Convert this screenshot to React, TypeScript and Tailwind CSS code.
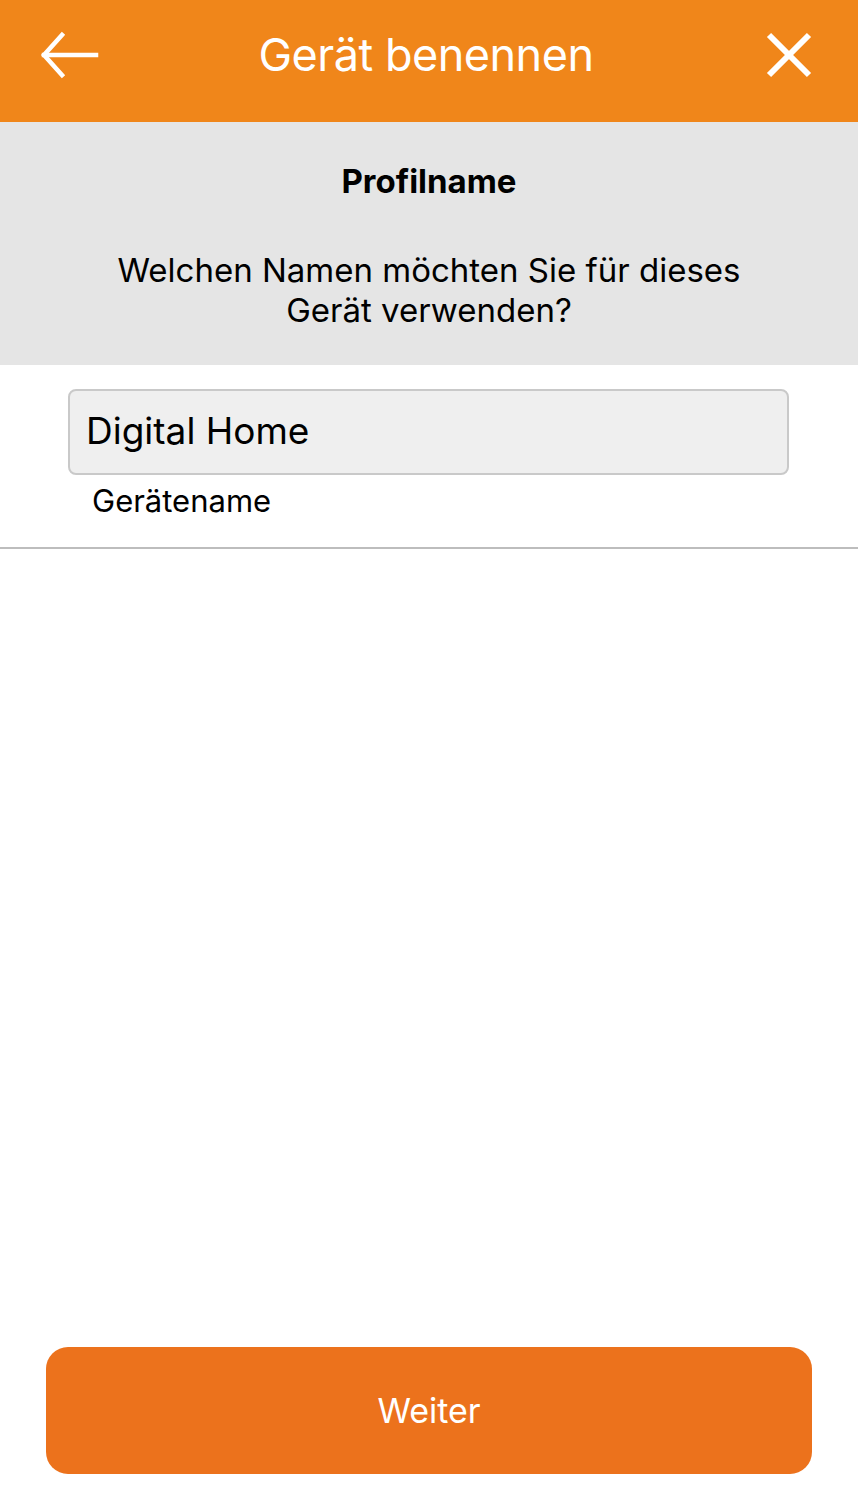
import { useState } from "react";

function BackArrow() {
  return (
    <svg width="60" height="48" viewBox="0 0 60 48" fill="none" stroke="white" strokeWidth="4.5" strokeLinecap="square">
      <path d="M4 24 H56" />
      <path d="M22 4 L4 24 L22 44" strokeLinejoin="miter" />
    </svg>
  );
}

function CloseIcon() {
  return (
    <svg width="46" height="46" viewBox="0 0 46 46" fill="none" stroke="white" strokeWidth="6" strokeLinecap="butt">
      <path d="M3 3 L43 43" />
      <path d="M43 3 L3 43" />
    </svg>
  );
}

export default function App() {
  const [name, setName] = useState("Digital Home");

  return (
    <div className="flex min-h-[1500px] w-[858px] flex-col bg-white font-['Inter',sans-serif] text-black">
      {/* header */}
      <header className="grid h-[122px] grid-cols-[1fr_auto_1fr] items-center bg-[#f0861a] pb-[12px] pl-[40px] pr-[46px]">
        <button className="flex items-center justify-self-start">
          <BackArrow />
        </button>
        <h1 className="text-[45px] font-normal tracking-[-0.5px] text-white">Gerät benennen</h1>
        <button className="flex items-center justify-self-end">
          <CloseIcon />
        </button>
      </header>

      {/* intro */}
      <section className="flex h-[243px] flex-col items-center bg-[#e5e5e5] pt-[40px] text-center">
        <h2 className="text-[33px] font-bold leading-[38px]">Profilname</h2>
        <p className="mt-[50px] text-[33px] leading-[40px]">
          Welchen Namen möchten Sie für dieses
          <br />
          Gerät verwenden?
        </p>
      </section>

      {/* name field */}
      <div className="border-b-2 border-[#bdbdbd] px-[68px] pb-[28px] pt-[24px]">
        <input
          value={name}
          onChange={(e) => setName(e.target.value)}
          className="h-[86px] w-[721px] rounded-[8px] border-2 border-[#c9c9c9] bg-[#efefef] px-[16px] pb-[4px] text-[37px] text-black outline-none"
        />
        <div className="mt-[8px] pl-[24px] text-[31px] leading-[36px]">Gerätename</div>
      </div>

      <div className="flex-1" />

      <div className="px-[46px] pb-[26px]">
        <button className="h-[127px] w-full rounded-[22px] bg-[#ec721c] text-[34px] text-white">Weiter</button>
      </div>
    </div>
  );
}
